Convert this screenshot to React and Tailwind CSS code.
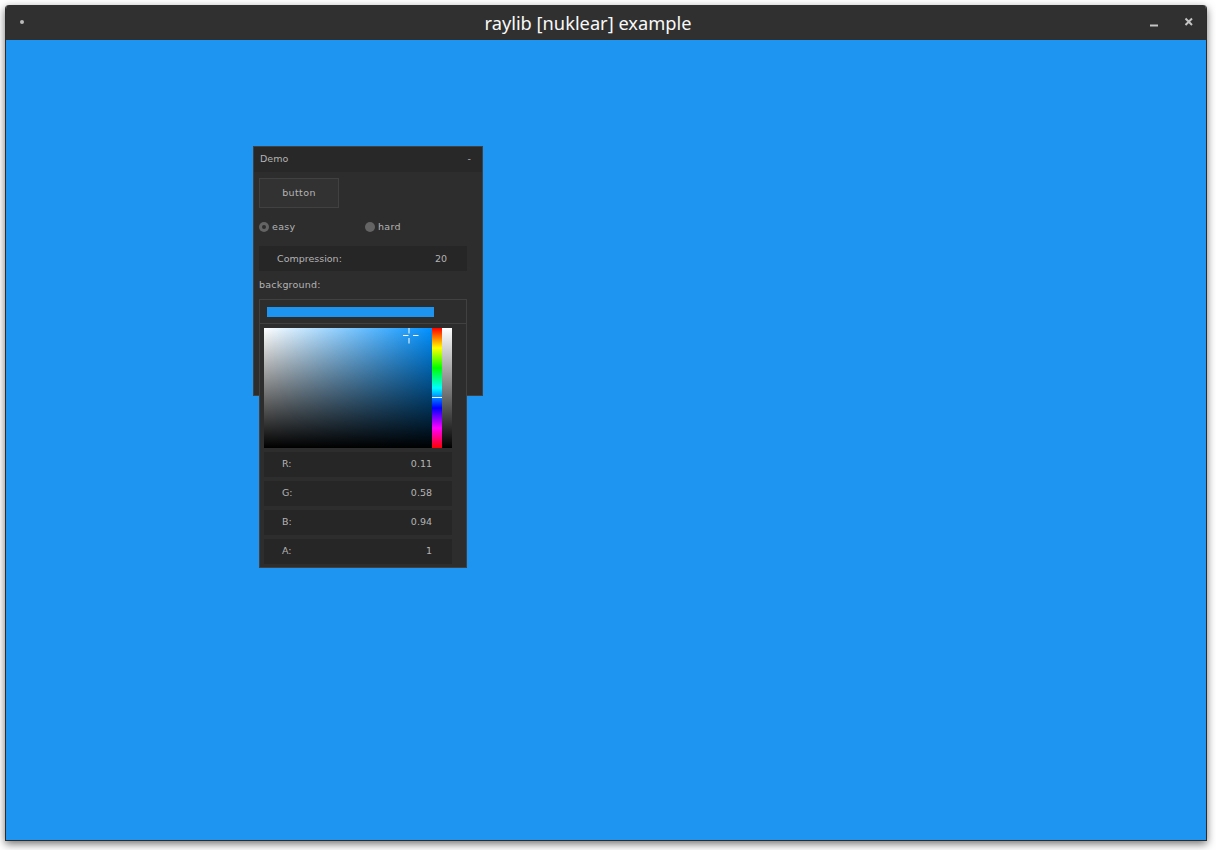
import React from "react";

const uiFont = "font-['DejaVu_Sans',sans-serif] text-[9.5px] leading-none text-[#b4b4b4]";

// numeric field used by Compression and the r/g/b/a rows
const Property = ({ label, value, className }) => (
  <div className={`flex items-center justify-between bg-[#262626] pl-[18px] pr-[20px] ${className}`}>
    <span>{label}</span>
    <span>{value}</span>
  </div>
);

const Radio = ({ label, active, className }) => (
  <div className={`flex items-center gap-[3px] ${className}`}>
    <span className="flex h-[10px] w-[10px] items-center justify-center rounded-full bg-[#646464]">
      {active && <span className="h-[4px] w-[4px] rounded-full bg-[#2d2d2d]" />}
    </span>
    <span className="tracking-[0.3px]">{label}</span>
  </div>
);

const ColorPicker = () => (
  <div className="absolute left-[5px] top-[152px] h-[269px] w-[208px] border border-[#414141] bg-[#2d2d2d]">
    <div className="flex h-[24px] items-center border-b border-[#414141] pl-[7px]">
      <div className="h-[10px] w-[167px] bg-[#1c94f0]" />
    </div>
    <div className="pl-[4px] pt-[4px]">
      <div className="flex h-[120px] w-[188px]">
        <div className="relative h-full w-[168px] bg-[linear-gradient(to_bottom,transparent,#000),linear-gradient(to_right,#fff,#0091ff)]">
          <svg className="absolute left-[139px] top-0" width="16" height="16" viewBox="0 0 16 16">
            <path d="M6 0v5.5M6 10v5.5M0 7.5h5.5M10 7.5h5.5" stroke="#fff" strokeWidth="1" fill="none" />
          </svg>
        </div>
        <div className="relative h-full w-[10px] bg-[linear-gradient(to_bottom,#f00,#ff0,#0f0,#0ff,#00f,#f0f,#f00)]">
          <div className="absolute left-0 top-[69px] h-px w-full bg-white" />
        </div>
        <div className="h-full w-[10px] bg-[linear-gradient(to_bottom,#fff,#000)]" />
      </div>
      <div className="mt-[4px] flex w-[188px] flex-col gap-[4px]">
        <Property label="R:" value="0.11" className="h-[25px] pb-[2px]" />
        <Property label="G:" value="0.58" className="h-[25px] pb-[2px]" />
        <Property label="B:" value="0.94" className="h-[25px] pb-[2px]" />
        <Property label="A:" value="1" className="h-[25px] pb-[2px]" />
      </div>
    </div>
  </div>
);

const DemoWindow = () => (
  <div className={`absolute left-[247px] top-[106px] h-[250px] w-[230px] border border-[#414141] bg-[#2d2d2d] ${uiFont}`}>
    <div className="flex h-[25px] items-center justify-between bg-[#282828] pb-[2px] pl-[6px] pr-[11px]">
      <span>Demo</span>
      <span>-</span>
    </div>
    <div className="flex flex-col px-[5px] pt-[6px]">
      <div className="flex h-[30px] w-[80px] items-center justify-center border border-[#414141] bg-[#323232] tracking-[0.4px]">
        button
      </div>
      <div className="mt-[14px] flex h-[10px] items-center">
        <Radio label="easy" active className="w-[106px]" />
        <Radio label="hard" />
      </div>
      <Property label="Compression:" value="20" className="mt-[14px] h-[25px] w-[208px]" />
      <div className="mt-[9px] flex h-[10px] items-center tracking-[0.2px]">background:</div>
    </div>
    <ColorPicker />
  </div>
);

export default function App() {
  return (
    <div className="h-[850px] w-[1216px] bg-white pl-[5px] pt-[5px]">
      <div className="flex h-[836px] w-[1202px] flex-col overflow-hidden rounded-t-[4px] border-x border-b border-[#2c2c2c] shadow-[0_3px_9px_rgba(0,0,0,0.55)]">
        <header className="relative flex h-[35px] shrink-0 items-center justify-center bg-[#303030] pr-[36px] font-['Noto_Sans',sans-serif] text-[18.25px] text-[#f8f8f8]">
          <span className="absolute left-[14px] top-[15px] h-[4px] w-[4px] rounded-full bg-[#bbbbbb]" />
          <span>raylib [nuklear] example</span>
          <svg className="absolute left-[1143px] top-[11px]" width="50" height="16" viewBox="0 0 50 16">
            <path d="M1 9.5h8" stroke="#c4c4c4" strokeWidth="2" fill="none" />
            <path d="M36.5 2.5l6.5 6.5M43 2.5l-6.5 6.5" stroke="#c4c4c4" strokeWidth="2" fill="none" />
          </svg>
        </header>
        <main className="relative flex-1 bg-[#1e95f1]">
          <DemoWindow />
        </main>
      </div>
    </div>
  );
}
